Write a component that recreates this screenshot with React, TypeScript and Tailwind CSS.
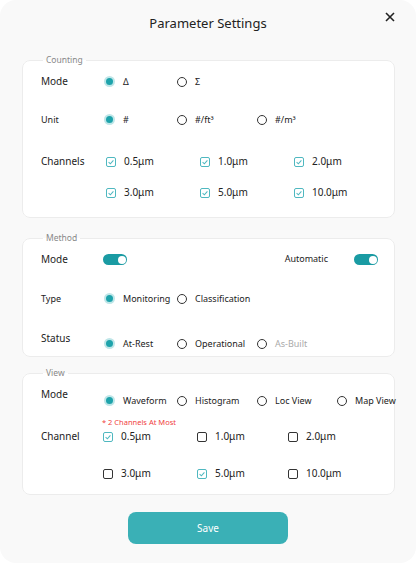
import { FC, ReactNode } from "react";

const Radio: FC<{ on?: boolean }> = ({ on }) =>
  on ? (
    <span className="w-[11px] h-[11px] rounded-full bg-[#bfe6e8] grid place-items-center shrink-0">
      <span className="w-[7px] h-[7px] rounded-full bg-[#1ea3ab]" />
    </span>
  ) : (
    <span className="w-[10px] h-[10px] rounded-full border border-[#333] shrink-0" />
  );

const Check: FC<{ on?: boolean }> = ({ on }) =>
  on ? (
    <span className="w-[10px] h-[10px] rounded-[2px] border border-[#4fb8c0] grid place-items-center shrink-0">
      <svg viewBox="0 0 10 10" className="w-[8px] h-[8px]">
        <path d="M2 5.2 L4.2 7.2 L8 3" fill="none" stroke="#4fb8c0" strokeWidth="1.3" />
      </svg>
    </span>
  ) : (
    <span className="w-[10px] h-[10px] rounded-[2px] border border-[#333] shrink-0" />
  );

const Toggle = () => (
  <span className="w-[24px] h-[11px] rounded-full bg-[#1a9ba3] flex items-center justify-end px-[1.5px] shrink-0">
    <span className="w-[8px] h-[8px] rounded-full bg-white" />
  </span>
);

const Opt: FC<{ on?: boolean; w: string; children: ReactNode; muted?: boolean }> = ({
  on,
  w,
  children,
  muted,
}) => (
  <div className={`flex items-center gap-[8px] shrink-0 ${w}`}>
    <Radio on={on} />
    <span className={`text-[9px] ${muted ? "text-[#aaa]" : "text-[#222]"}`}>{children}</span>
  </div>
);

const Box: FC<{ on?: boolean; w: string; children: ReactNode }> = ({ on, w, children }) => (
  <div className={`flex items-center gap-[8px] shrink-0 ${w}`}>
    <Check on={on} />
    <span className="text-[10px] text-[#222]">{children}</span>
  </div>
);

const Card: FC<{ title: string; className: string; children: ReactNode }> = ({
  title,
  className,
  children,
}) => (
  <fieldset
    className={`ml-[22px] w-[373px] min-w-0 bg-white border border-[#ececec] rounded-[8px] pl-[18px] ${className}`}
  >
    <legend className="ml-[2px] px-[3px] text-[8.5px] text-[#888]">{title}</legend>
    {children}
  </fieldset>
);

export default function App() {
  return (
    <div
      className="w-[416px] h-[563px] bg-white"
      style={{ fontFamily: '"Noto Sans", sans-serif' }}
    >
      <div className="w-full h-full bg-[#f9f9f9] rounded-[16px] flex flex-col relative">
        <div className="h-[48px] flex items-center justify-center">
          <h1 className="text-[13px] text-[#222] mt-[-1px]">Parameter Settings</h1>
        </div>
        <button className="absolute right-[20px] top-[11px] text-[#222]" aria-label="close">
          <svg viewBox="0 0 12 12" className="w-[12px] h-[12px]">
            <path d="M2 2 L10 10 M10 2 L2 10" stroke="#222" strokeWidth="1.6" />
          </svg>
        </button>

        <Card title="Counting" className="h-[164px] mt-[6px] pr-0">
          <div className="flex items-center h-[20px] mt-[5px]">
            <span className="w-[63px] text-[10px] text-[#222] shrink-0">Mode</span>
            <Opt on w="w-[73px]">Δ</Opt>
            <Opt w="w-[73px]">Σ</Opt>
          </div>
          <div className="flex items-center h-[20px] mt-[18px]">
            <span className="w-[63px] text-[9px] text-[#222] shrink-0">Unit</span>
            <Opt on w="w-[73px]">#</Opt>
            <Opt w="w-[80px]">#/ft³</Opt>
            <Opt w="w-[80px]">#/m³</Opt>
          </div>
          <div className="flex h-[20px] items-center mt-[22px]">
            <span className="w-[65px] text-[10px] text-[#222] shrink-0">Channels</span>
            <Box on w="w-[94px]">0.5μm</Box>
            <Box on w="w-[94px]">1.0μm</Box>
            <Box on w="w-[94px]">2.0μm</Box>
          </div>
          <div className="flex h-[20px] items-center mt-[11px] pl-[65px]">
            <Box on w="w-[94px]">3.0μm</Box>
            <Box on w="w-[94px]">5.0μm</Box>
            <Box on w="w-[94px]">10.0μm</Box>
          </div>
        </Card>

        <Card title="Method" className="h-[125px] mt-[14px] pr-[16px]">
          <div className="flex items-center h-[20px] mt-[5px]">
            <span className="w-[62px] text-[10px] text-[#222] shrink-0">Mode</span>
            <Toggle />
            <span className="ml-auto mr-[26px] text-[9px] text-[#222] mt-[-2px]">Automatic</span>
            <Toggle />
          </div>
          <div className="flex items-center h-[20px] mt-[19px]">
            <span className="w-[63px] text-[9px] text-[#222] shrink-0">Type</span>
            <Opt on w="w-[73px]">Monitoring</Opt>
            <Opt w="w-[80px]">Classification</Opt>
          </div>
          <div className="flex items-center h-[20px] mt-[20px]">
            <span className="w-[63px] text-[10px] text-[#222] shrink-0">Status</span>
            <div className="flex items-center h-[12px] mt-[10px]">
              <Opt on w="w-[73px]">At-Rest</Opt>
              <Opt w="w-[80px]">Operational</Opt>
              <Opt muted w="w-[80px]">As-Built</Opt>
            </div>
          </div>
        </Card>

        <Card title="View" className="h-[128px] mt-[10px] pr-0">
          <div className="flex items-center h-[20px] mt-[5px]">
            <span className="w-[63px] text-[10px] text-[#222] shrink-0">Mode</span>
            <div className="flex items-center h-[12px] mt-[12px] whitespace-nowrap">
              <Opt on w="w-[73px]">Waveform</Opt>
              <Opt w="w-[80px]">Histogram</Opt>
              <Opt w="w-[80px]">Loc View</Opt>
              <Opt w="w-[60px]">Map View</Opt>
            </div>
          </div>
          <div className="pl-[61px] mt-[12px] text-[7.5px] text-[#f04040] leading-[10px]">
            * 2 Channels At Most
          </div>
          <div className="flex h-[20px] items-center">
            <span className="w-[62px] text-[10px] text-[#222] shrink-0">Channel</span>
            <Box on w="w-[94px]">0.5μm</Box>
            <Box w="w-[91px]">1.0μm</Box>
            <Box w="w-[91px]">2.0μm</Box>
          </div>
          <div className="flex h-[20px] items-center mt-[17px] pl-[62px]">
            <Box w="w-[94px]">3.0μm</Box>
            <Box on w="w-[91px]">5.0μm</Box>
            <Box w="w-[91px]">10.0μm</Box>
          </div>
        </Card>

        <div className="flex justify-center mt-[17px]">
          <button className="w-[160px] h-[32px] rounded-[8px] bg-[#3ab0b6] text-white text-[10px]">
            Save
          </button>
        </div>
      </div>
    </div>
  );
}
